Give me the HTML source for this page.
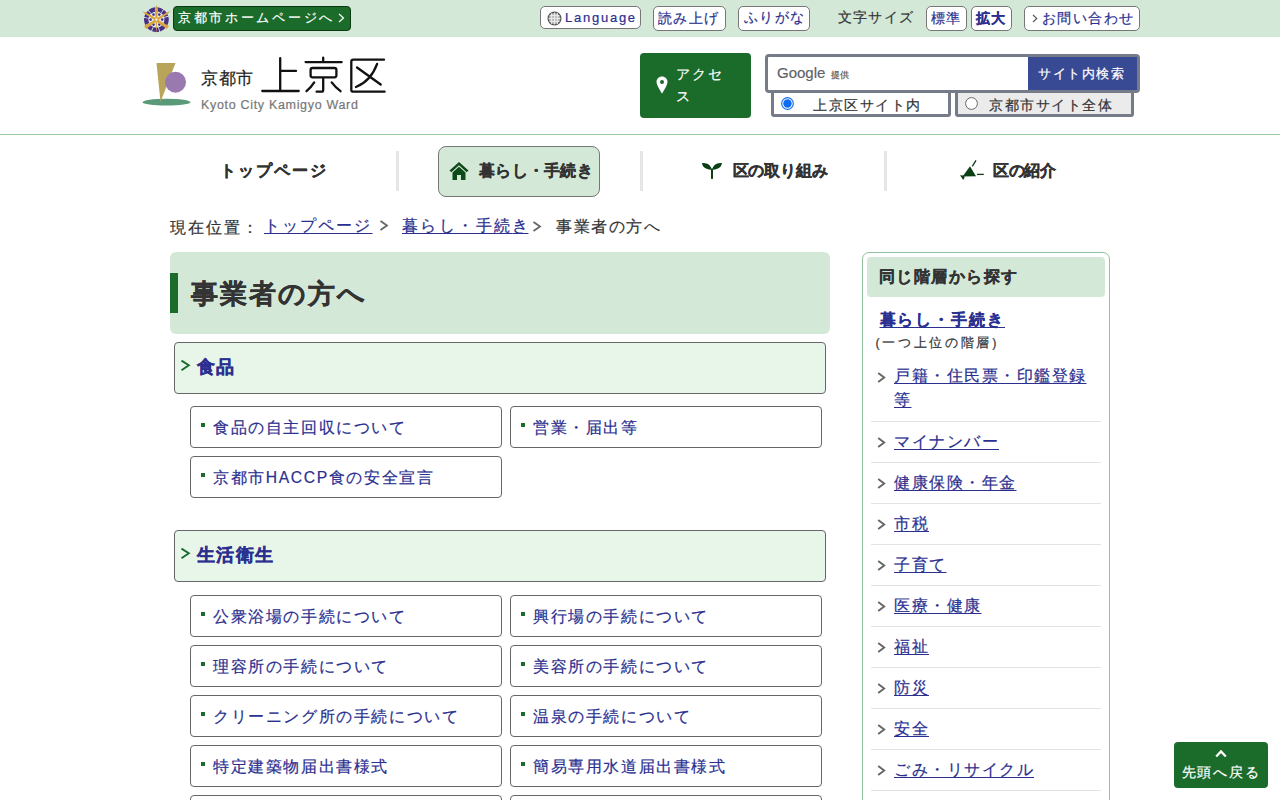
<!DOCTYPE html><html lang="ja"><head>
<meta charset="utf-8">
<style>
*{box-sizing:border-box;margin:0;padding:0}
html,body{width:1280px;height:800px;overflow:hidden;background:#fff}
body{font-family:"Liberation Sans",sans-serif;color:#333;position:relative;-webkit-text-stroke:0.2px currentColor}
.abs{position:absolute}
a{color:#2b2f8f}
/* top bar */
#topbar{position:absolute;left:0;top:0;width:1280px;height:37px;background:#d4e8d8}
.tbtn{position:absolute;top:7px;height:23px;background:#fff;border:1px solid #777;border-radius:5px;color:#2b2f8f;font-size:14px;line-height:21px;letter-spacing:1.4px;white-space:nowrap}
#home{position:absolute;left:173px;top:6px;width:178px;height:25px;background:#1b6b2b;border:1px solid #0a3a12;border-radius:4px;color:#fff;font-size:13px;line-height:23px;letter-spacing:2.7px;white-space:nowrap}
/* header */
#hline{position:absolute;left:0;top:134px;width:1280px;height:1px;background:#9ccfa4}
#access{position:absolute;left:640px;top:53px;width:111px;height:65px;background:#1b6b2b;border-radius:4px;color:#fff;font-size:14px;line-height:22px;letter-spacing:1.8px}
#search{position:absolute;left:765px;top:54px;width:375px;height:39px;border:3px solid #767b8a;border-radius:4px;background:#fff}
#sbtn{position:absolute;right:0;top:0;width:109px;height:33px;background:#394a95;color:#fff;font-size:13px;line-height:33px;letter-spacing:1.5px;padding-right:2px;text-align:center}
.radio{position:absolute;top:90px;height:27px;border:3px solid #767b8a;border-radius:3px;font-size:14px;line-height:21px;letter-spacing:1.55px;color:#333;white-space:nowrap}
/* nav */
.nav{position:absolute;top:146px;height:51px;font-size:17px;font-weight:bold;color:#333;line-height:51px;white-space:nowrap}
.sep{position:absolute;top:151px;width:3px;height:40px;background:#e6e6e6}
/* breadcrumb */
#bc{position:absolute;left:170px;top:214px;font-size:16px;line-height:24px;letter-spacing:1.5px;white-space:nowrap;color:#333}
#bc a{color:#2b2f8f}
#bc .gt{color:#666;margin:0 4px}
/* title */
#title{position:absolute;left:170px;top:252px;width:660px;height:82px;background:#d4e8d8;border-radius:6px}
#title .bar{position:absolute;left:0;top:21px;width:8px;height:40px;background:#1b6b2b}
#title h1{position:absolute;left:21px;top:0;line-height:82px;font-size:30px;font-weight:bold;color:#333;white-space:nowrap}
.cat{position:absolute;left:174px;width:652px;height:52px;background:#e8f5e9;border:1px solid #666;border-radius:4px}
.cat .chev{position:absolute;left:5px;top:15px;width:11px;height:15px}
.cat span{position:absolute;left:22px;top:0;line-height:50px;font-size:18px;font-weight:bold;color:#2b2f8f;letter-spacing:1.2px}
.lk{position:absolute;width:312px;height:42px;border:1px solid #666;border-radius:4px;background:#fff}
.lk i{position:absolute;left:10px;top:16px;width:4px;height:4px;background:#1b6b2b}
.lk span{position:absolute;left:22px;top:0;line-height:40px;font-size:16px;color:#2b2f8f;letter-spacing:1.4px;white-space:nowrap}
/* sidebar */
#side{position:absolute;left:862px;top:252px;width:248px;height:600px;border:1px solid #92c29c;border-radius:7px}
#side .hd{position:absolute;left:4px;top:4px;width:238px;height:40px;background:#d4e8d8;border-radius:4px;font-size:16px;font-weight:bold;line-height:40px;padding-left:12px;color:#333;letter-spacing:0.5px}
.si{position:absolute;left:8px;width:230px;border-bottom:1px solid #e3e3e3}
.si .c{position:absolute;left:6px;width:9px;height:12px}
.si a{position:absolute;left:22px;font-size:17px;line-height:24px;letter-spacing:1.7px;white-space:nowrap}
#totop{position:absolute;left:1174px;top:742px;width:94px;height:46px;background:#1b6b2b;border-radius:4px;color:#fff;font-size:15px;text-align:center}
.t{position:absolute;white-space:nowrap;line-height:1.25}
.u{text-decoration:underline;text-underline-offset:2px}
.catt{font-size:17px;letter-spacing:1.5px;font-weight:bold;color:#2b2f8f;-webkit-text-stroke:0.3px currentColor}
.lkt{font-size:16px;letter-spacing:1.4px;color:#2b2f8f;-webkit-text-stroke:0.2px currentColor}
.sit{font-size:15px;letter-spacing:1.5px;color:#2b2f8f;-webkit-text-stroke:0.2px currentColor}
.sline{position:absolute;left:871px;width:230px;height:1px;background:#e3e3e3}
</style>
</head>
<body>
<div id="topbar">
  <svg class="abs" style="left:140px;top:3px" width="33" height="34" viewBox="0 0 33 34">
    <circle cx="16.4" cy="16.6" r="10.2" fill="none" stroke="#4a2f86" stroke-width="4.4" stroke-dasharray="6 0.8"></circle>
    <circle cx="16.4" cy="16.6" r="7.6" fill="#e8eef0"></circle>
    <g fill="#4a2f86"><circle cx="22.2" cy="16.6" r="1.3"></circle><circle cx="10.6" cy="16.6" r="1.3"></circle><circle cx="19.3" cy="11.6" r="1.3"></circle><circle cx="13.5" cy="11.6" r="1.3"></circle><circle cx="19.3" cy="21.6" r="1.3"></circle><circle cx="13.5" cy="21.6" r="1.3"></circle></g>
    <g fill="#d9a640">
      <path d="M16.4 2 L18 6 L17.3 16.6 L16.4 31.8 L15.5 16.6 L14.8 6 Z"></path>
      <path d="M2 8 L6 9.6 L16.4 15.2 L16.9 17.6 L15.6 17.8 L5 11 Z"></path>
      <path d="M30.6 8 L26.8 9.6 L16.4 15.2 L15.9 17.6 L17.2 17.8 L27.6 11 Z"></path>
      <path d="M4 23 L16.4 15.8 L17.2 18 L6 26 Z"></path>
      <path d="M28.8 23 L16.4 15.8 L15.6 18 L26.8 26 Z"></path>
    </g>
    <circle cx="16.4" cy="16.6" r="1.1" fill="#fff"></circle>
  </svg>
  <div id="home"><span class="abs" style="left:4px;top:-1px">京都市ホームページへ</span><svg class="abs" style="left:164px;top:6px" width="7" height="10" viewBox="0 0 7 10"><path d="M1 1L5.5 5 1 9" fill="none" stroke="#fff" stroke-width="1.2"></path></svg></div>
  <div class="tbtn" style="left:540px;width:101px;top:6px;height:23px">
    <svg class="abs" style="left:6px;top:4px" width="15" height="15" viewBox="0 0 15 15"><circle cx="7.5" cy="7.5" r="6.3" fill="#bbb" stroke="#555" stroke-width="1.4"></circle><g stroke="#eee" stroke-width="0.9" fill="none"><line x1="1.5" y1="7.5" x2="13.5" y2="7.5"></line><line x1="7.5" y1="1.5" x2="7.5" y2="13.5"></line><line x1="2.5" y1="4.6" x2="12.5" y2="4.6"></line><line x1="2.5" y1="10.4" x2="12.5" y2="10.4"></line><line x1="4.6" y1="2" x2="4.6" y2="13"></line><line x1="10.4" y1="2" x2="10.4" y2="13"></line></g></svg>
    <span class="abs" id="lang" style="left:24px;top:0;font-size:13px;letter-spacing:1.75px">Language</span></div>
  <div class="tbtn" style="left:653px;width:73px;top:6px;height:25px"><span class="abs" style="left:4px;top:1px">読み上げ</span></div>
  <div class="tbtn" style="left:738px;width:72px;top:6px;height:25px"><span class="abs" style="left:5px;top:0px">ふりがな</span></div>
  <div class="abs" style="left:838px;top:6px;font-size:14px;line-height:23px;letter-spacing:1.2px;color:#333">文字サイズ</div>
  <div class="tbtn" style="left:926px;width:41px;top:6px;height:25px"><span class="abs" style="left:4px;top:1px">標準</span></div>
  <div class="tbtn" style="left:971px;width:41px;top:6px;height:25px;font-weight:bold"><span class="abs" style="left:4px;top:1px">拡大</span></div>
  <div class="tbtn" style="left:1024px;width:116px;top:6px;height:25px">
    <svg class="abs" style="left:7px;top:7px" width="6" height="9" viewBox="0 0 6 9"><path d="M1 1L4.8 4.5 1 8" fill="none" stroke="#555" stroke-width="1.1"></path></svg>
    <span class="abs" style="left:17px;top:1px">お問い合わせ</span></div>
</div>

<!-- logo -->
<svg class="abs" style="left:140px;top:60px" width="54" height="50" viewBox="0 0 54 50">
  <ellipse cx="26.5" cy="42.2" rx="24" ry="3.4" fill="#5a9a78"></ellipse>
  <polygon points="16.5,3 35.5,3 20.5,42" fill="#b9a55a"></polygon>
  <circle cx="35.5" cy="22.2" r="10.5" fill="#9a78b0"></circle>
</svg>
<div class="abs" style="left:201px;top:66.5px;font-size:17px;line-height:24px;color:#222;letter-spacing:0.5px">京都市</div>
<svg class="abs" style="left:258px;top:52px" width="132" height="46" viewBox="0 0 132 46"><g fill="none" stroke="#111" stroke-width="2.3" stroke-linecap="round" stroke-linejoin="round">
<path d="M22.2 6.2V38.7M22.2 18.9H38M4.3 39H40.7"></path>
<path d="M65.2 5.7V9.8M47.6 10.1H83.7M54.6 16H76.4Q78.4 16 78.4 18V23.3Q78.4 25.3 76.4 25.3H54.6Q52.6 25.3 52.6 23.3V18Q52.6 16 54.6 16ZM65.2 25.3V38Q65.2 39.7 63.5 39.7H58.6M56.2 30.4Q53 35.5 48.5 39.2M73.7 30.4Q77.5 35.5 82.5 39.2"></path>
<path d="M126 7.7H95.3Q93.3 7.7 93.3 9.7V37.7Q93.3 39.7 95.3 39.7H126.6M99 15.5L122.7 32.5M119.1 11.9Q113 29 98 35"></path>
</g></svg>
<div class="abs" style="left:201px;top:97px;font-size:12.5px;line-height:16px;color:#777;letter-spacing:0.68px">Kyoto City Kamigyo Ward</div>

<div id="access">
  <svg class="abs" style="left:16px;top:23px" width="12" height="18" viewBox="0 0 12 18"><path d="M6 0.5C2.9 0.5 0.5 2.9 0.5 6c0 3.6 5.5 11.5 5.5 11.5S11.5 9.6 11.5 6C11.5 2.9 9.1 0.5 6 0.5z" fill="#fff"></path><circle cx="6" cy="6" r="2" fill="#1b6b2b"></circle></svg>
  <div class="abs" style="left:36px;top:10px;width:52px">アクセス</div>
</div>

<div id="search">
  <div class="abs" style="left:9px;top:6px;font-size:15px;line-height:20px;color:#5f6368">Google <span style="font-size:9px;color:#555;margin-left:1px">提供</span></div>
  <div id="sbtn">サイト内検索</div>
</div>
<div class="radio" style="left:771px;width:180px;background:#fff">
  <svg class="abs" style="left:7px;top:4px" width="13" height="13" viewBox="0 0 13 13"><circle cx="6.5" cy="6.5" r="5.8" fill="#fff" stroke="#1a73e8" stroke-width="1.2"></circle><circle cx="6.5" cy="6.5" r="4.2" fill="#0a6cf5"></circle></svg>
  <span class="abs" style="left:39px;top:2px">上京区サイト内</span>
</div>
<div class="radio" style="left:955px;width:179px;background:#ebebeb">
  <svg class="abs" style="left:7px;top:4px" width="13" height="13" viewBox="0 0 13 13"><circle cx="6.5" cy="6.5" r="5.9" fill="#fff" stroke="#666" stroke-width="1"></circle></svg>
  <span class="abs" style="left:31px;top:2px">京都市サイト全体</span>
</div>
<div id="hline"></div>

<!-- nav -->
<span class="t" id="n1" style="left: 220px; top: 161.13px; font-size: 16px; letter-spacing: 2px; font-weight: bold; -webkit-text-stroke: 0.3px currentColor; color: rgb(51, 51, 51);">トップページ</span>
<div class="sep" style="left:396px"></div>
<div class="abs" style="left:438px;top:146px;width:162px;height:51px;background:#d4e8d8;border:1px solid #777;border-radius:8px"></div>
<svg class="abs" style="left:449px;top:161px" width="20" height="19" viewBox="0 0 20 19"><path d="M10 1L0.5 9.5 2.3 11.2 10 4.3 17.7 11.2 19.5 9.5z" fill="#0d4a1a"></path><path d="M3.5 11.5L10 5.8 16.5 11.5V19H12V14H8V19H3.5z" fill="#0d4a1a"></path></svg>
<span class="t" id="n2" style="left: 479px; top: 161.25px; font-size: 16px; letter-spacing: 0.25px; font-weight: bold; -webkit-text-stroke: 0.3px currentColor; color: rgb(51, 51, 51);">暮らし・手続き</span>
<div class="sep" style="left:640px"></div>
<svg class="abs" style="left:696px;top:156px" width="30" height="30" viewBox="0 0 30 30"><g fill="#0d3f17"><path d="M6 7.1C11 6.4 14.8 9.3 15.9 13.6C10.5 14 6.4 11.6 6 7.1Z"/><path d="M25.9 7.1C20.9 6.4 17.1 9.3 16 13.6C21.4 14 25.5 11.6 25.9 7.1Z"/><rect x="15" y="12.8" width="2" height="10.1"/></g></svg>
<span class="t" id="n3" style="left: 732.5px; top: 161px; font-size: 16px; letter-spacing: -0.2px; font-weight: bold; -webkit-text-stroke: 0.3px currentColor; color: rgb(51, 51, 51);">区の取り組み</span>
<div class="sep" style="left:884px"></div>
<svg class="abs" style="left:950px;top:150px" width="40" height="40" viewBox="0 0 40 40"><g fill="#0d3f17"><path d="M20 16.2L26 26.2 12.6 26.6Z"/><path d="M10 25.2L14 25.6 14.6 27.6 13.2 30Z"/></g><g stroke="#0d3f17" stroke-width="1.3" fill="none"><path d="M22.3 16.4L26 10.3"/><path d="M27 24.4H33.8"/></g></svg>
<span class="t" id="n4" style="left: 993px; top: 160.5px; font-size: 16px; letter-spacing: -0.5px; font-weight: bold; -webkit-text-stroke: 0.3px currentColor; color: rgb(51, 51, 51);">区の紹介</span>

<!-- breadcrumb -->
<span class="t" id="b1" style="left: 170px; top: 218px; font-size: 16px; letter-spacing: 2px; color: rgb(51, 51, 51);">現在位置：</span>
<span class="t u" id="b2" style="left: 264px; top: 216.25px; font-size: 16px; letter-spacing: 2.1px; color: rgb(43, 47, 143);">トップページ</span>
<svg class="abs" style="left:379px;top:220px" width="10" height="11" viewBox="0 0 10 11"><path d="M1.5 1L8 5.5 1.5 10" fill="none" stroke="#666" stroke-width="1.8"></path></svg>
<span class="t u" id="b4" style="left: 402px; top: 215.5px; font-size: 16px; letter-spacing: 2.41px; color: rgb(43, 47, 143);">暮らし・手続<span style="letter-spacing:0">き</span></span>
<svg class="abs" style="left:532px;top:221px" width="10" height="11" viewBox="0 0 10 11"><path d="M1.5 1L8 5.5 1.5 10" fill="none" stroke="#666" stroke-width="1.8"></path></svg>
<span class="t" id="b6" style="left: 556px; top: 217px; font-size: 16px; letter-spacing: 1.5px; color: rgb(51, 51, 51);">事業者の方へ</span>

<!-- title -->
<div id="title"><div class="bar"></div></div>
<span class="t" id="ttl" style="left: 190.5px; top: 278px; font-size: 27px; letter-spacing: 2.1px; font-weight: bold; -webkit-text-stroke: 0.3px currentColor; color: rgb(51, 51, 51);">事業者の方へ</span>

<!-- category 1 -->
<div class="cat" style="top:342px">
  <svg class="chev" viewBox="0 0 11 15"><path d="M1.5 2.6L8.8 7.3 1.5 12.2" fill="none" stroke="#1b6b2b" stroke-width="1.9"></path></svg>
</div>
<span class="t catt" id="c1" style="left: 197px; top: 357px; font-size: 17.6px; letter-spacing: 1.25px;">食品</span>
<div class="lk" style="left:190px;top:406px"><i></i></div>
<span class="t lkt" id="l1" style="left: 213px; top: 417.75px; font-size: 15.7px; letter-spacing: 1.6px;">食品の自主回収について</span>
<div class="lk" style="left:510px;top:406px"><i></i></div>
<span class="t lkt" style="left: 533px; top: 417.75px; font-size: 15.7px; letter-spacing: 1.6px;">営業・届出等</span>
<div class="lk" style="left:190px;top:456px"><i></i></div>
<span class="t lkt" style="left: 213px; top: 467.75px; font-size: 15.7px; letter-spacing: 1.6px;">京都市HACCP食の安全宣言</span>

<!-- category 2 -->
<div class="cat" style="top:530px">
  <svg class="chev" viewBox="0 0 11 15"><path d="M1.5 2.6L8.8 7.3 1.5 12.2" fill="none" stroke="#1b6b2b" stroke-width="1.9"></path></svg>
</div>
<span class="t catt" id="c2" style="left: 197px; top: 545px; font-size: 17.6px; letter-spacing: 1.25px;">生活衛生</span>
<div class="lk" style="left:190px;top:595px"><i></i></div><span class="t lkt" style="left: 213px; top: 606.75px; font-size: 15.7px; letter-spacing: 1.6px;">公衆浴場の手続について</span>
<div class="lk" style="left:510px;top:595px"><i></i></div><span class="t lkt" style="left: 533px; top: 606.75px; font-size: 15.7px; letter-spacing: 1.6px;">興行場の手続について</span>
<div class="lk" style="left:190px;top:645px"><i></i></div><span class="t lkt" style="left: 213px; top: 656.75px; font-size: 15.7px; letter-spacing: 1.6px;">理容所の手続について</span>
<div class="lk" style="left:510px;top:645px"><i></i></div><span class="t lkt" style="left: 533px; top: 656.75px; font-size: 15.7px; letter-spacing: 1.6px;">美容所の手続について</span>
<div class="lk" style="left:190px;top:695px"><i></i></div><span class="t lkt" style="left: 213px; top: 706.75px; font-size: 15.7px; letter-spacing: 1.6px;">クリーニング所の手続について</span>
<div class="lk" style="left:510px;top:695px"><i></i></div><span class="t lkt" style="left: 533px; top: 706.75px; font-size: 15.7px; letter-spacing: 1.6px;">温泉の手続について</span>
<div class="lk" style="left:190px;top:745px"><i></i></div><span class="t lkt" style="left: 213px; top: 756.75px; font-size: 15.7px; letter-spacing: 1.6px;">特定建築物届出書様式</span>
<div class="lk" style="left:510px;top:745px"><i></i></div><span class="t lkt" style="left: 533px; top: 756.75px; font-size: 15.7px; letter-spacing: 1.6px;">簡易専用水道届出書様式</span>
<div class="lk" style="left:190px;top:795px"></div><div class="lk" style="left:510px;top:795px"></div>

<!-- sidebar -->
<div id="side"><div class="hd"></div></div>
<span class="t" id="sh" style="left: 878.75px; top: 267px; font-size: 15.5px; letter-spacing: 1.46px; font-weight: bold; -webkit-text-stroke: 0.3px currentColor; color: rgb(51, 51, 51);">同じ階層から探す</span>
<span class="t u" id="su" style="left: 879.5px; top: 309.5px; font-size: 16px; letter-spacing: 1.93px; font-weight: bold; color: rgb(43, 47, 143);">暮らし・手続き</span>
<span class="t" id="sp" style="left: 875.5px; top: 336.25px; font-size: 12.5px; letter-spacing: 2.69px; color: rgb(51, 51, 51);">(一つ上位の階層)</span>
<div class="sline" style="top:421px"></div><svg class="abs" style="left:877px;top:372px" width="9" height="11" viewBox="0 0 9 11"><path d="M1.2 1L7.2 5.5 1.2 10" fill="none" stroke="#666" stroke-width="1.9"></path></svg><span class="t u sit" id="s0" style="left: 894px; top: 366.25px; font-size: 16px; letter-spacing: 1.5px;">戸籍・住民票・印鑑登録</span><span class="t u sit" style="left: 894px; top: 390.25px; font-size: 16px; letter-spacing: 1.5px;">等</span>
<div class="sline" style="top:462px"></div><svg class="abs" style="left:877px;top:437px" width="9" height="11" viewBox="0 0 9 11"><path d="M1.2 1L7.2 5.5 1.2 10" fill="none" stroke="#666" stroke-width="1.9"></path></svg><span class="t u sit" id="s1" style="left: 894px; top: 432.25px; font-size: 16px; letter-spacing: 1.5px;">マイナンバー</span>
<div class="sline" style="top:503px"></div><svg class="abs" style="left:877px;top:478px" width="9" height="11" viewBox="0 0 9 11"><path d="M1.2 1L7.2 5.5 1.2 10" fill="none" stroke="#666" stroke-width="1.9"></path></svg><span class="t u sit" style="left: 894px; top: 473.25px; font-size: 16px; letter-spacing: 1.5px;">健康保険・年金</span>
<div class="sline" style="top:544px"></div><svg class="abs" style="left:877px;top:519px" width="9" height="11" viewBox="0 0 9 11"><path d="M1.2 1L7.2 5.5 1.2 10" fill="none" stroke="#666" stroke-width="1.9"></path></svg><span class="t u sit" style="left: 894px; top: 514.25px; font-size: 16px; letter-spacing: 1.5px;">市税</span>
<div class="sline" style="top:585px"></div><svg class="abs" style="left:877px;top:560px" width="9" height="11" viewBox="0 0 9 11"><path d="M1.2 1L7.2 5.5 1.2 10" fill="none" stroke="#666" stroke-width="1.9"></path></svg><span class="t u sit" style="left: 894px; top: 555.25px; font-size: 16px; letter-spacing: 1.5px;">子育て</span>
<div class="sline" style="top:626px"></div><svg class="abs" style="left:877px;top:601px" width="9" height="11" viewBox="0 0 9 11"><path d="M1.2 1L7.2 5.5 1.2 10" fill="none" stroke="#666" stroke-width="1.9"></path></svg><span class="t u sit" style="left: 894px; top: 596.25px; font-size: 16px; letter-spacing: 1.5px;">医療・健康</span>
<div class="sline" style="top:667px"></div><svg class="abs" style="left:877px;top:642px" width="9" height="11" viewBox="0 0 9 11"><path d="M1.2 1L7.2 5.5 1.2 10" fill="none" stroke="#666" stroke-width="1.9"></path></svg><span class="t u sit" style="left: 894px; top: 637.25px; font-size: 16px; letter-spacing: 1.5px;">福祉</span>
<div class="sline" style="top:708px"></div><svg class="abs" style="left:877px;top:683px" width="9" height="11" viewBox="0 0 9 11"><path d="M1.2 1L7.2 5.5 1.2 10" fill="none" stroke="#666" stroke-width="1.9"></path></svg><span class="t u sit" style="left: 894px; top: 678.25px; font-size: 16px; letter-spacing: 1.5px;">防災</span>
<div class="sline" style="top:749px"></div><svg class="abs" style="left:877px;top:724px" width="9" height="11" viewBox="0 0 9 11"><path d="M1.2 1L7.2 5.5 1.2 10" fill="none" stroke="#666" stroke-width="1.9"></path></svg><span class="t u sit" style="left: 894px; top: 719.25px; font-size: 16px; letter-spacing: 1.5px;">安全</span>
<div class="sline" style="top:790px"></div><svg class="abs" style="left:877px;top:765px" width="9" height="11" viewBox="0 0 9 11"><path d="M1.2 1L7.2 5.5 1.2 10" fill="none" stroke="#666" stroke-width="1.9"></path></svg><span class="t u sit" style="left: 894px; top: 760.25px; font-size: 16px; letter-spacing: 1.5px;">ごみ・リサイクル</span>

<div id="totop">
  <svg class="abs" style="left:41px;top:7px" width="12" height="9" viewBox="0 0 12 9"><path d="M1.2 7.5L6 2.5 10.8 7.5" fill="none" stroke="#fff" stroke-width="2.3"></path></svg>
</div>
<span class="t" id="tt" style="left: 1181.5px; top: 764px; font-size: 14px; letter-spacing: 1.75px; color: rgb(255, 255, 255);">先頭へ戻る</span>


</body></html>
